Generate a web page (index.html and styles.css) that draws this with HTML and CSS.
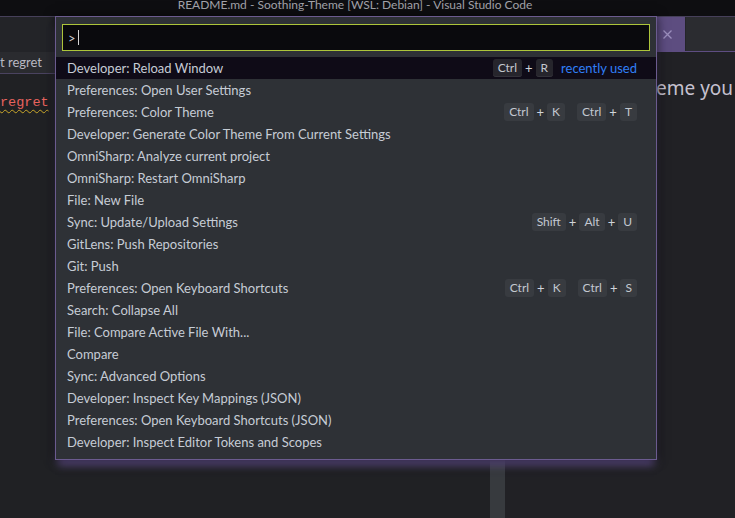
FILE: index.html
```html
<!DOCTYPE html>
<html lang="en">
<head>
<meta charset="utf-8">
<title>Command Palette</title>
<link rel="stylesheet" href="styles.css">
</head>
<body>
<div class="titlebar"><span class="title">README.md - Soothing-Theme [WSL: Debian] - Visual Studio Code</span></div>
<div class="workbench">
  <div class="group group-left">
    <div class="tabbar"></div>
    <div class="crumbs">t regret</div>
    <div class="editor">
      <div class="code"><div class="line"><span class="err">regret</span></div></div>
      <div class="vscroll"></div>
    </div>
  </div>
  <div class="group group-right">
    <div class="tabbar tabbar-right">
      <div class="tab-active">
        <span class="tab-close"><svg width="9" height="9" viewBox="0 0 9 9"><path d="M0.5 0.5 L8.5 8.5 M8.5 0.5 L0.5 8.5" stroke="#9c8fbd" stroke-width="1.3" fill="none"/></svg></span>
      </div>
      <div class="tab-rest"></div>
    </div>
    <div class="preview"><p class="preview-text">eme you</p></div>
  </div>
</div>

<div class="quick-input">
  <div class="qi-input"><span class="qi-value">&gt;</span><span class="caret"></span></div>
  <ul class="qi-list">
    <li class="qi-row qi-focused"><span class="label">Developer: Reload Window</span><span class="keys"><kbd>Ctrl</kbd><span class="plus">+</span><kbd>R</kbd></span><span class="recent">recently used</span></li>
    <li class="qi-row"><span class="label">Preferences: Open User Settings</span></li>
    <li class="qi-row"><span class="label">Preferences: Color Theme</span><span class="keys"><kbd>Ctrl</kbd><span class="plus">+</span><kbd>K</kbd><span class="chord-gap"></span><kbd>Ctrl</kbd><span class="plus">+</span><kbd>T</kbd></span></li>
    <li class="qi-row"><span class="label">Developer: Generate Color Theme From Current Settings</span></li>
    <li class="qi-row"><span class="label">OmniSharp: Analyze current project</span></li>
    <li class="qi-row"><span class="label">OmniSharp: Restart OmniSharp</span></li>
    <li class="qi-row"><span class="label">File: New File</span></li>
    <li class="qi-row"><span class="label">Sync: Update/Upload Settings</span><span class="keys"><kbd>Shift</kbd><span class="plus">+</span><kbd>Alt</kbd><span class="plus">+</span><kbd>U</kbd></span></li>
    <li class="qi-row"><span class="label">GitLens: Push Repositories</span></li>
    <li class="qi-row"><span class="label">Git: Push</span></li>
    <li class="qi-row"><span class="label">Preferences: Open Keyboard Shortcuts</span><span class="keys"><kbd>Ctrl</kbd><span class="plus">+</span><kbd>K</kbd><span class="chord-gap"></span><kbd>Ctrl</kbd><span class="plus">+</span><kbd>S</kbd></span></li>
    <li class="qi-row"><span class="label">Search: Collapse All</span></li>
    <li class="qi-row"><span class="label">File: Compare Active File With...</span></li>
    <li class="qi-row"><span class="label">Compare</span></li>
    <li class="qi-row"><span class="label">Sync: Advanced Options</span></li>
    <li class="qi-row"><span class="label">Developer: Inspect Key Mappings (JSON)</span></li>
    <li class="qi-row"><span class="label">Preferences: Open Keyboard Shortcuts (JSON)</span></li>
    <li class="qi-row"><span class="label">Developer: Inspect Editor Tokens and Scopes</span></li>
  </ul>
</div>
</body>
</html>
```

FILE: styles.css
```css
* { box-sizing: border-box; }

html, body {
  margin: 0;
  padding: 0;
}

body {
  width: 735px;
  height: 518px;
  overflow: hidden;
  background: #202124;
  font-family: Lato, "Noto Sans", sans-serif;
  position: relative;
}

.titlebar {
  height: 17px;
  background: #0e0e11;
  border-bottom: 1px solid #46405a;
  overflow: hidden;
  text-align: center;
}

.title {
  display: block;
  margin-top: -4px;
  line-height: 17px;
  font-size: 12px;
  color: #a3a3aa;
  padding-right: 25px;
}

.workbench {
  display: flex;
  height: 501px;
}

.group {
  display: flex;
  flex-direction: column;
  overflow: hidden;
}

.group-left { width: 505px; }
.group-right { flex: 1; }

.tabbar {
  height: 35px;
  background: #232428;
  flex: none;
}

.crumbs {
  height: 22px;
  background: #2a2b2f;
  border-bottom: 1px solid #4a4360;
  font-size: 13px;
  line-height: 21px;
  color: #b9b9c2;
  white-space: nowrap;
}

.editor {
  flex: 1;
  display: flex;
  background: #202124;
}

.code {
  flex: 1;
  padding-top: 19px;
}

.line {
  font-family: "Liberation Mono", monospace;
  font-size: 13.5px;
  line-height: 19px;
  height: 19px;
}

.err {
  color: #e8635e;
  text-decoration: underline wavy #c9a72a;
  text-underline-offset: 3px;
  text-decoration-thickness: 1px;
}

.vscroll {
  width: 15px;
  background: #373a3e;
}

.tabbar-right {
  height: 35px;
  display: flex;
  border-bottom: 1px solid #5e4d82;
  background: #2b2c30;
}

.tab-active {
  width: 180px;
  background: #5d4d80;
  display: flex;
  justify-content: flex-end;
  align-items: center;
}

.tab-close {
  width: 28px;
  height: 28px;
  margin-right: 4px;
  display: flex;
  align-items: center;
  justify-content: center;
}

.tab-close svg { display: block; }

.tab-rest {
  flex: 1;
  border-left: 1px solid #242529;
}

.preview {
  flex: 1;
  background: #212125;
  padding: 23px 0 0 151px;
}

.preview-text {
  margin: 0;
  font-family: "Noto Sans", sans-serif;
  font-size: 19px;
  line-height: 26px;
  color: #c6c1d0;
  white-space: nowrap;
}

/* Quick input overlay */
.quick-input {
  position: absolute;
  left: 55px;
  top: 16px;
  width: 602px;
  height: 444px;
  background: #2e3136;
  border: 1px solid #6b5b8f;
  padding: 7px 6px 6px 6px;
  box-shadow: 0 0 10px rgba(0, 0, 0, 0.65), 0 8px 8px -3px rgba(104, 84, 150, 0.9);
  z-index: 5;
}

.qi-input {
  height: 27px;
  background: #0a0a0d;
  border: 1px solid #adc53a;
  display: flex;
  align-items: center;
  padding-left: 5px;
  font-size: 13px;
  color: #c8ccd2;
}

.caret {
  display: inline-block;
  width: 1px;
  height: 15px;
  background: #d6d6d6;
  margin-left: 2px;
}

.qi-list {
  list-style: none;
  margin: 6px -6px 0 -6px;
  padding: 0;
}

.qi-row {
  height: 22px;
  display: flex;
  align-items: center;
  padding: 0 19px 0 11px;
  font-size: 13px;
  color: #c6ccd5;
  white-space: nowrap;
}

.qi-focused {
  background: #0f0b17;
}

.label { flex: 1; }

.keys {
  display: flex;
  align-items: center;
}

kbd {
  font-family: Lato, "Noto Sans", sans-serif;
  font-size: 12px;
  height: 18px;
  line-height: 18px;
  padding: 0 5px;
  border-radius: 3px;
  background: #383b40;
  color: #c3c8d0;
}

.qi-focused kbd {
  background: #26252c;
  box-shadow: inset 0 -1px 0 #33323a;
}

.plus {
  font-size: 13px;
  margin: 0 3px;
  color: #d0d4da;
}

.chord-gap {
  width: 12px;
}

.recent {
  margin-left: 8px;
  color: #2f7ff7;
  font-size: 13px;
}
```
